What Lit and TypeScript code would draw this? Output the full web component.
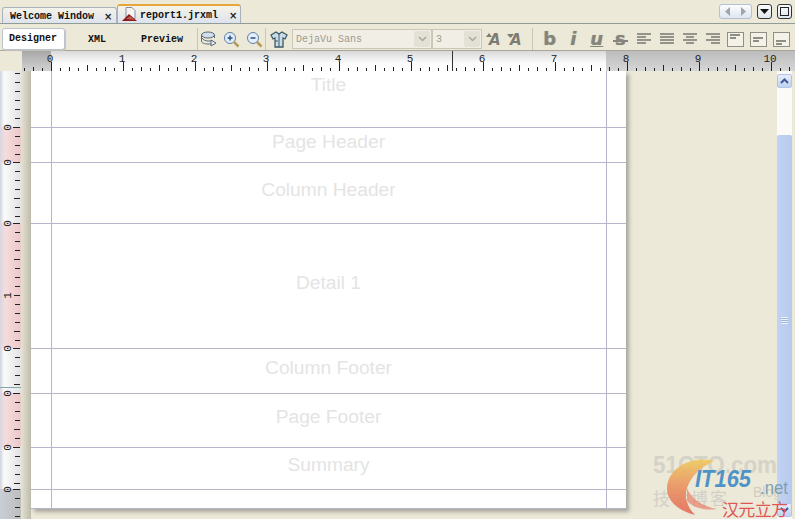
import { LitElement, html, css, svg } from "lit";
import { customElement } from "lit/decorators.js";

const RX = 51;
const IN = 72;

function hRuler() {
  const out: unknown[] = [];
  for (let i = -3; i * 9 + RX < 800; i++) {
    const x = RX + i * 9 - 22 + 0.5;
    const h = i % 8 === 0 ? 9 : i % 4 === 0 ? 6 : i % 2 === 0 ? 4 : 3;
    out.push(svg`<line x1=${x} x2=${x} y1=${20 - h} y2="20" stroke="#222" />`);
  }
  for (let n = 0; n <= 10; n++) {
    out.push(svg`<text x=${RX - 22 + n * IN - 1} y="11" text-anchor="middle" class="rt">${n}</text>`);
  }
  return out;
}

const vMarks = [
  { y: 127, l: "0" }, { y: 162, l: "0" }, { y: 223, l: "0" }, { y: 295, l: "1" },
  { y: 348, l: "0" }, { y: 393, l: "0" }, { y: 447, l: "0" }, { y: 489, l: "0" },
];

function vRuler() {
  const out: unknown[] = [];
  const top = 71;
  const starts = [
    [127, 162], [162, 223], [223, 348], [348, 393], [393, 447], [447, 489], [489, 519],
  ];
  for (const [a, b] of starts) {
    for (let y = a; y < b; y += 9) {
      const h = y === a ? 7 : (y - a) % 36 === 0 ? 6 : 5;
      out.push(svg`<line x1=${20 - h} x2="20" y1=${y - top + 0.5} y2=${y - top + 0.5} stroke="#222" />`);
    }
  }
  for (let y = 127 - 9; y > 71; y -= 9) {
    out.push(svg`<line x1="15" x2="20" y1=${y - top + 0.5} y2=${y - top + 0.5} stroke="#222" />`);
  }
  for (const m of vMarks) {
    out.push(svg`<text transform="translate(11 ${m.y - top + 0.5}) rotate(-90)" text-anchor="middle" class="rt">${m.l}</text>`);
  }
  return out;
}

const bands = [
  { h: 57, t: "Title", top: 2 },
  { h: 35, t: "Page Header", top: 2 },
  { h: 61, t: "Column Header", top: 15 },
  { h: 125, t: "Detail 1", top: 47 },
  { h: 45, t: "Column Footer", top: 7 },
  { h: 54, t: "Page Footer", top: 11 },
  { h: 42, t: "Summary", top: 5 },
  { h: 19, t: "", top: 0 },
];

const pinks = [
  { top: 56, h: 35 },
  { top: 152, h: 125 },
  { top: 322, h: 54 },
];

const alignIcon = (rows: number[][]) => svg`<svg width="16" height="14" viewBox="0 0 16 14">
  ${rows.map((r, i) => svg`<rect x=${r[0]} y=${1 + i * 3} width=${r[1]} height="2" fill="#94948a" />`)}
</svg>`;

const boxIcon = (y: number) => svg`<svg width="17" height="15" viewBox="0 0 17 15">
  <rect x="0.5" y="0.5" width="16" height="14" fill="#f4f2e8" stroke="#8f8f85" />
  <rect x="3" y=${y} width="10" height="2" fill="#8e8e84" /><rect x="3" y=${y + 3} width="6" height="2" fill="#8e8e84" />
</svg>`;

const chevron = svg`<svg width="9" height="6"><path d="M1 1l3.500 3.500L8 1" fill="none" stroke="#a8a8a0" stroke-width="1.500" /></svg>`;

@customElement("app-root")
export class AppRoot extends LitElement {
  static styles = css`
    :host { display: block; width: 795px; height: 519px; overflow: hidden; background: #ece9d8; font-family: "Liberation Mono", monospace; color: #111; }
    .tabbar { height: 24px; display: flex; align-items: flex-end; position: relative; box-sizing: border-box; border-bottom: 1px solid #8f9c98; }
    .tab { flex: none; box-sizing: border-box; display: flex; align-items: center; font: bold 10px "Liberation Mono", monospace; background: linear-gradient(#f3f2ea, #dfe3ec); border: 1px solid #aab1b8; border-bottom: 0; border-radius: 3px 3px 0 0; white-space: nowrap; }
    .tab.one { width: 115px; height: 16px; margin-left: 2px; gap: 10px; padding: 2px 3px 0 7px; }
    .tab.two { width: 124px; height: 19px; padding: 1px 0 0 4px; gap: 11px; background: linear-gradient(#f6f4e8, #dde3ef); border-top: 2px solid #e8a53c; }
    .tab .x { font: bold 10px "DejaVu Sans", sans-serif; color: #222; }
    .doc { margin-right: -9px; display: block; flex: none; }
    .winbtns { margin-left: auto; margin-right: 3px; display: flex; gap: 5px; align-self: flex-start; margin-top: 4px; }
    .pager { width: 33px; height: 15px; box-sizing: border-box; border: 1px solid #b5c1d2; border-radius: 3px; background: linear-gradient(#fbfcfe, #dfe6f0); display: flex; align-items: center; justify-content: space-around; }
    .wbtn { width: 15px; height: 15px; box-sizing: border-box; border: 1px solid #333; border-radius: 3px; background: linear-gradient(#fafbfd, #dfe6ee); display: flex; align-items: center; justify-content: center; }
    .toolbar { height: 27px; box-sizing: border-box; padding-top: 4px; display: flex; align-items: center; border-bottom: 1px solid #a8a698; position: relative; }
    .toolbar > * { flex: none; }
    .vtab { font: bold 10px "Liberation Mono", monospace; white-space: nowrap; text-align: center; }
    .vtab.on { width: 61px; margin-left: 2px; height: 20px; line-height: 20px; background: #fff; border: 1px solid #b9c4d0; border-radius: 3px; box-shadow: 1px 1px 1px #c6c3b3; text-indent: -1px; }
    .vtab.xml { width: 64px; }
    .vtab.pv { width: 66px; }
    .sep { width: 1px; height: 22px; background: #c9c6b6; margin: 0 2px; flex: none; }
    .sep.tail { margin: 0 4px 0 2px; }
    .icons { display: flex; align-items: center; gap: 6px; margin-left: 0; }
    .sel { height: 20px; box-sizing: border-box; border: 1px solid #c9c7b6; background: #f1efe5; display: flex; align-items: center; font: 10px "Liberation Mono", monospace; color: #9b9b90; padding-left: 3px; justify-content: space-between; }
    .sel.font { width: 140px; margin-left: 4px; }
    .sel.size { width: 50px; }
    .arrow { width: 16px; height: 16px; margin-right: 1px; background: #e3e1d6; border-radius: 2px; display: flex; align-items: center; justify-content: center; }
    .fmt { display: flex; align-items: center; margin-left: 2px; }
    .fmt > * { flex: none; }
    .fmt .sep { margin: 0 5px 0 6px; }
    .big { font: bold 18px "DejaVu Sans", sans-serif; color: #85857c; text-shadow: 0 0 1px #9a9a90; line-height: 20px; position: relative; }
    .big.italic { font-style: italic; }
    .big.under { text-decoration: underline; font-style: italic; }
    .big.strike::after { content: ""; position: absolute; left: 4px; right: 4px; top: 11px; height: 2px; background: #85857c; }
    .fmt .b { width: 23.5px; text-align: center; }
    .fmt .az { width: 21px; display: flex; justify-content: center; }
    .az text { font: italic bold 15px "DejaVu Sans", sans-serif; fill: #7c7c74; }
    .fmt .al { width: 23px; display: flex; justify-content: center; }
    .rulerrow { height: 20px; display: flex; }
    .corner { width: 22px; background: #ece9d8; }
    .hruler { flex: 1; position: relative; background: linear-gradient(#d9d9d9, #fbfbfb 60%, #fff); overflow: hidden; }
    .shade { position: absolute; top: 0; bottom: 0; background: linear-gradient(#bcbcbc, #d6d6d6); }
    .shade.l { left: 0; width: 29px; background: linear-gradient(#a8a8a8, #d2d2d2); }
    .shade.r { left: 584px; right: 0; }
    svg.rsvg { position: absolute; left: 0; top: 0; display: block; }
    .rt { font: 11px "Liberation Mono", monospace; fill: #222; }
    .body { display: flex; height: 448px; }
    .vruler { width: 21px; position: relative; background: linear-gradient(90deg, #cfd4dc 0, #fbfbfb 20%, #e2e2e2 100%); flex: none; overflow: hidden; }
    .pink { position: absolute; left: 0; right: 0; background: linear-gradient(90deg, #d8d6e2 0, #f6dcdc 25%, #eac8c8 100%); }
    .grey { position: absolute; left: 0; right: 0; top: 418px; bottom: 0; background: linear-gradient(90deg, #c9ced6, #bdbdbd); }
    .blue { position: absolute; left: 0; right: 0; top: 316px; height: 1px; background: #86a4ae; }
    .canvas { flex: 1; display: flex; align-items: flex-start; position: relative; overflow: hidden; background: #ece9d8; }
    .lshadow { width: 10px; align-self: stretch; background: linear-gradient(90deg, #e6e3d0, #bdbbad); flex: none; }
    .page { width: 595px; height: 438px; background: #fff; position: relative; box-shadow: 3px 3px 4px #a9a79b; display: flex; flex-direction: column; flex: none; }
    .band { box-sizing: border-box; border-bottom: 1px solid #b5b5cc; text-align: center; font: 19.2px "Liberation Sans", sans-serif; color: #e4e4e4; flex: none; }
    .band:last-of-type { border-bottom: 0; }
    .band span { display: block; line-height: 23px; }
    .guide { position: absolute; top: 0; bottom: 0; width: 1px; background: #b5b5cc; }
    .guide.a { left: 20px; }
    .guide.b { left: 575px; }
    .mark { position: absolute; left: 430px; top: 0; height: 20px; width: 1px; background: #333; }
    .scroll { position: absolute; left: 756px; top: 0; width: 15px; height: 448px; background: #fbfaf6; }
    .sbtn { position: absolute; left: 0; width: 15px; height: 14px; box-sizing: border-box; border: 1px solid #b3c5e6; border-radius: 2px; background: linear-gradient(#e6eefc, #c0d2f0); display: flex; align-items: center; justify-content: center; }
    .sbtn.up { top: 3px; }
    .sbtn.down { top: 432px; }
    .thumb { position: absolute; left: 0; top: 64px; width: 15px; bottom: 14px; background: linear-gradient(90deg, #c2d3f3, #b6caef); border-radius: 2px; display: flex; align-items: center; justify-content: center; }
    .grip { width: 7px; height: 7px; background: repeating-linear-gradient(#eef3fc 0 1px, #9fb5dc 1px 2px); }
    .wm { position: absolute; left: 629px; top: 374px; display: block; }
    .wm text { font-family: "Liberation Sans", "Noto Sans CJK SC", sans-serif; }
  `;

  render() {
    return html`
      <div class="tabbar">
        <div class="tab one"><span>Welcome Window</span><span class="x">×</span></div>
        <div class="tab two">
          <svg class="doc" width="16" height="16" viewBox="0 0 16 16">
            <path d="M4 .5h6l3 3v8H4z" fill="#f4f4f4" stroke="#8a8a9a" />
            <path d="M0 14l7-7 8 7z" fill="#8b1a1a" /><path d="M4 12l4-3 5 4z" fill="#c05a50" />
          </svg>
          <span>report1.jrxml</span><span class="x">×</span>
        </div>
        <div class="winbtns">
          <div class="pager">
            <svg width="5" height="9"><path d="M5 0v9L0 4.500z" fill="#9ea5ad" /></svg>
            <svg width="5" height="9"><path d="M0 0v9l5-4.500z" fill="#9ea5ad" /></svg>
          </div>
          <div class="wbtn"><svg width="9" height="5"><path d="M0 0h9L4.500 5z" fill="#111" /></svg></div>
          <div class="wbtn"><svg width="9" height="9"><rect x=".5" y=".5" width="8" height="8" fill="none" stroke="#222" /></svg></div>
        </div>
      </div>

      <div class="toolbar">
        <div class="vtab on">Designer</div>
        <div class="vtab xml">XML</div>
        <div class="vtab pv">Preview</div>
        <div class="sep"></div>
        <div class="icons">
          <svg width="17" height="16" viewBox="0 0 17 16">
            <ellipse cx="8" cy="4" rx="6.500" ry="3" fill="#d4deea" stroke="#56687c" />
            <path d="M1.500 4v6c0 2 3 3 6.500 3h3M14.500 4v3" fill="none" stroke="#56687c" />
            <path d="M2 7c1 2 4 3 6 3h5" fill="none" stroke="#56687c" />
            <path d="M11 9l5 3-5 3z" fill="#e9edf2" stroke="#56687c" />
          </svg>
          <svg width="17" height="17" viewBox="0 0 17 17">
            <circle cx="7" cy="7" r="5.500" fill="#e3eefb" stroke="#5c7fa8" />
            <path d="M4.500 7h5M7 4.500v5" stroke="#2b4f86" stroke-width="1.500" />
            <path d="M11 11l4.500 4.500" stroke="#b89a58" stroke-width="2.500" />
          </svg>
          <svg width="17" height="17" viewBox="0 0 17 17">
            <circle cx="7" cy="7" r="5.500" fill="#e3eefb" stroke="#5c7fa8" />
            <path d="M4.500 7h5" stroke="#2b4f86" stroke-width="1.500" />
            <path d="M11 11l4.500 4.500" stroke="#b89a58" stroke-width="2.500" />
          </svg>
        </div>
        <div class="sep tail"></div>
        <svg width="18" height="18" viewBox="0 0 18 18">
          <path d="M1 5l5-3 3 2 3-2 5 3-2 4-2-1v9H5V8L3 9z" fill="#c8dcea" stroke="#3e5a66" stroke-width="1.300" />
          <path d="M9 4v13" stroke="#3e5a66" /><path d="M5 11h3" stroke="#3e5a66" />
        </svg>
        <div class="sel font">
          <span>DejaVu Sans</span>
          <span class="arrow">${chevron}</span>
        </div>
        <div class="sel size">
          <span>3</span>
          <span class="arrow">${chevron}</span>
        </div>
        <div class="fmt">
          <span class="az"><svg width="17" height="18" viewBox="0 0 17 18"><path d="M0 7l3-4 3 4z" fill="#7c7c74" /><text x="3" y="15">A</text></svg></span>
          <span class="az"><svg width="17" height="18" viewBox="0 0 17 18"><path d="M0 4h7l-3.500 4z" fill="#7c7c74" /><text x="3" y="15">A</text></svg></span>
          <div class="sep"></div>
          <span class="big b">b</span>
          <span class="big b italic">i</span>
          <span class="big b under">u</span>
          <span class="big b strike">s</span>
          <span class="al">${alignIcon([[1, 14], [1, 9], [1, 14], [1, 9]])}</span>
          <span class="al">${alignIcon([[1, 14], [1, 14], [1, 14], [1, 14]])}</span>
          <span class="al">${alignIcon([[1, 14], [4, 8], [1, 14], [4, 8]])}</span>
          <span class="al">${alignIcon([[1, 14], [6, 9], [1, 14], [6, 9]])}</span>
          <span class="al">${boxIcon(2)}</span>
          <span class="al">${boxIcon(5)}</span>
          <span class="al">${boxIcon(8)}</span>
        </div>
      </div>

      <div class="rulerrow">
        <div class="corner"></div>
        <div class="hruler">
          <div class="shade l"></div>
          <div class="shade r"></div>
          <div class="mark"></div>
          <svg class="rsvg" width="773" height="20">${hRuler()}</svg>
        </div>
      </div>

      <div class="body">
        <div class="vruler">
          ${pinks.map(p => html`<div class="pink" style="top:${p.top}px;height:${p.h}px"></div>`)}
          <div class="grey"></div>
          <div class="blue"></div>
          <svg class="rsvg" width="21" height="448">${vRuler()}</svg>
        </div>
        <div class="canvas">
          <div class="lshadow"></div>
          <div class="page">
            ${bands.map(b => html`<div class="band" style="height:${b.h}px;padding-top:${b.top}px"><span>${b.t}</span></div>`)}
            <div class="guide a"></div>
            <div class="guide b"></div>
          </div>
          <div class="scroll">
            <div class="sbtn up"><svg width="9" height="6"><path d="M1 5l3.500-3.500L8 5" fill="none" stroke="#3c5a94" stroke-width="2" /></svg></div>
            <div class="thumb"><div class="grip"></div></div>
            <div class="sbtn down"><svg width="9" height="6"><path d="M1 1l3.500 3.500L8 1" fill="none" stroke="#3c5a94" stroke-width="2" /></svg></div>
          </div>
          <svg class="wm" width="145" height="74" viewBox="0 0 145 74">
            <defs>
              <linearGradient id="fl" x1="0" y1="0" x2="0" y2="1">
                <stop offset="0" stop-color="#efc95e" />
                <stop offset=".45" stop-color="#ea9560" />
                <stop offset="1" stop-color="#e46a5a" />
              </linearGradient>
            </defs>
            <text x="3" y="28" font-size="23" font-weight="700" fill="#d5d3c8" textLength="124" lengthAdjust="spacingAndGlyphs">51CTO.com</text>
            <text x="3" y="60" font-size="17" fill="#d2d0c6" letter-spacing="2">技术博客</text>
            <text x="103" y="52" font-size="14" fill="#cfcdc2">Blog</text>
            <path d="M64 16C40 10 17 24 17 44c0 12 12 22 28 26-8-8-11-18-8-27 4-12 14-21 27-27z" fill="url(#fl)" opacity=".9" />
            <path d="M37 43c4 10 14 18 30 21-12 2-23-1-30-8z" fill="#e8806a" opacity=".7" />
            <text x="45" y="42" font-size="23" font-weight="700" font-style="italic" fill="#4f93c6" textLength="56" lengthAdjust="spacingAndGlyphs">IT165</text>
            <text x="110" y="49" font-size="18" fill="#7d9fb6" textLength="28" lengthAdjust="spacingAndGlyphs">.net</text>
            <text x="72" y="71" font-size="17" fill="#e05555" textLength="66">汉元立方</text>
          </svg>
        </div>
      </div>
    `;
  }
}
